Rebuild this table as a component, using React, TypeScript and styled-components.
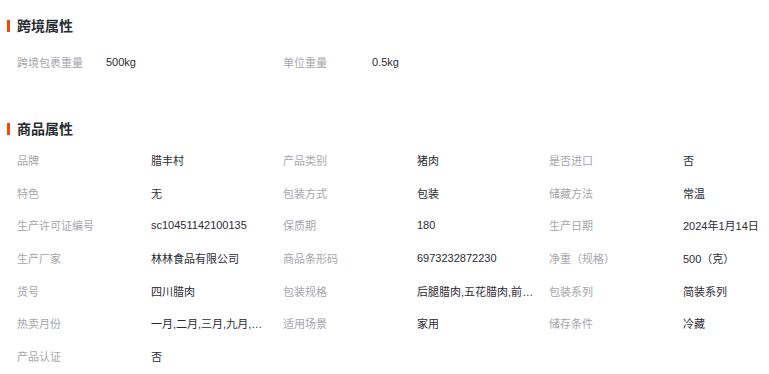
import styled, { createGlobalStyle } from 'styled-components';
import { Fragment } from 'react';

const GlobalStyle = createGlobalStyle`
  body {
    margin: 0;
    background: #fff;
    font-family: "Liberation Sans", "Noto Sans CJK SC", sans-serif;
  }
`;

type Attr = { label: string; value: string };

const crossBorder: Attr[] = [
  { label: '跨境包裹重量', value: '500kg' },
  { label: '单位重量', value: '0.5kg' },
];

const productAttrs: Attr[] = [
  { label: '品牌', value: '腊丰村' },
  { label: '产品类别', value: '猪肉' },
  { label: '是否进口', value: '否' },
  { label: '特色', value: '无' },
  { label: '包装方式', value: '包装' },
  { label: '储藏方法', value: '常温' },
  { label: '生产许可证编号', value: 'sc10451142100135' },
  { label: '保质期', value: '180' },
  { label: '生产日期', value: '2024年1月14日' },
  { label: '生产厂家', value: '林林食品有限公司' },
  { label: '商品条形码', value: '6973232872230' },
  { label: '净重（规格）', value: '500（克）' },
  { label: '货号', value: '四川腊肉' },
  { label: '包装规格', value: '后腿腊肉,五花腊肉,前腿腊肉,腊排骨' },
  { label: '包装系列', value: '简装系列' },
  { label: '热卖月份', value: '一月,二月,三月,九月,十月,十一月,十二月' },
  { label: '适用场景', value: '家用' },
  { label: '储存条件', value: '冷藏' },
  { label: '产品认证', value: '否' },
];

const Page = styled.div`
  width: 769px;
  overflow: hidden;
  padding-top: 15px;
`;

const Section = styled.section<{ $gap: number }>`
  margin-bottom: ${p => p.$gap}px;
`;

const Title = styled.h3<{ $after: number }>`
  position: relative;
  margin: 0 0 ${p => p.$after}px;
  padding-left: 17px;
  height: 20px;
  line-height: 20px;
  font-size: 14px;
  font-weight: 700;
  color: #2b2b33;
  font-family: "Noto Sans CJK SC", sans-serif;

  &::before {
    content: '';
    position: absolute;
    left: 7px;
    top: 5px;
    width: 3px;
    height: 12px;
    background: #ff4400;
  }
`;

const Grid = styled.div<{ $cols: string }>`
  display: grid;
  grid-template-columns: ${p => p.$cols};
  grid-auto-rows: 32.67px;
  padding-left: 17px;
  font-size: 11px;
  font-family: "Liberation Sans", "Noto Sans CJK SC", sans-serif;
`;

const Label = styled.div`
  display: flex;
  align-items: center;
  color: #a6a6ab;
  white-space: nowrap;
`;

const Value = styled.div`
  display: flex;
  align-items: center;
  min-width: 0;
  overflow: hidden;
  padding-right: 12px;
  color: #2b2b33;

  span {
    white-space: nowrap;
    overflow: hidden;
    text-overflow: ellipsis;
  }
`;

const AttrGrid = ({ items, cols }: { items: Attr[]; cols: string }) => (
  <Grid $cols={cols}>
    {items.map(item => (
      <Fragment key={item.label}>
        <Label>{item.label}</Label>
        <Value>
          <span>{item.value}</span>
        </Value>
      </Fragment>
    ))}
  </Grid>
);

const App = () => (
  <>
    <GlobalStyle />
    <Page>
      <Section $gap={39}>
        <Title $after={11}>跨境属性</Title>
        <AttrGrid items={crossBorder} cols='89px 177px 89px 177px' />
      </Section>
      <Section $gap={0}>
        <Title $after={6}>商品属性</Title>
        <AttrGrid items={productAttrs} cols='134px 132px 134px 132px 134px 132px' />
      </Section>
    </Page>
  </>
);

export default App;
